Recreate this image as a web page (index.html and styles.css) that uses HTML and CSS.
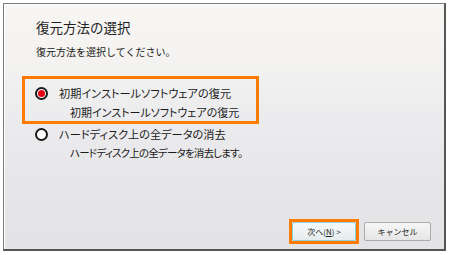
FILE: index.html
```html
<!DOCTYPE html>
<html lang="ja">
<head>
<meta charset="utf-8">
<link rel="stylesheet" href="styles.css">
</head>
<body>
<div class="dialog">
  <div class="content">
    <div class="title">復元方法の選択</div>
    <div class="lead">復元方法を選択してください。</div>
    <div class="option selected">
      <div class="opt-line"><span class="radio checked"></span><span class="label">初期インストールソフトウェアの復元</span></div>
      <div class="desc">初期インストールソフトウェアの復元</div>
    </div>
    <div class="option plain">
      <div class="opt-line"><span class="radio"></span><span class="label">ハードディスク上の全データの消去</span></div>
      <div class="desc desc-tight">ハードディスク上の全データを消去します。</div>
    </div>
  </div>
  <div class="footer">
    <div class="highlight"><button class="btn btn-next">次へ(<u>N</u>) &gt;</button></div>
    <button class="btn">キャンセル</button>
  </div>
</div>
</body>
</html>
```
FILE: styles.css
```css
html, body {
  margin: 0;
  padding: 0;
  background: #ffffff;
}
body {
  font-family: "Noto Sans CJK JP", "Noto Sans", sans-serif;
  color: #1a1a1a;
}
.dialog {
  margin: 3px 0 0 3px;
  width: 443px;
  height: 248px;
  box-sizing: border-box;
  border-left: 1px solid #7a7a7a;
  border-top: 1px solid #7a7a7a;
  border-right: 2px solid #555555;
  border-bottom: 2px solid #555555;
  box-shadow: inset 1px 1px 0 #ffffff;
  background: linear-gradient(#f7f6f3 0%, #f4f3f1 22%, #ececee 45%, #e7e7ea 70%, #e3e3e5 100%);
  display: flex;
  flex-direction: column;
}
.content {
  padding: 14px 0 0 18px;
}
.title {
  margin-left: 14px;
  font-size: 13.5px;
  line-height: 18px;
  color: #1e1e1e;
}
.lead {
  margin: 9px 0 0 14px;
  font-size: 10px;
  line-height: 14px;
}
.option {
  width: 237px;
  box-sizing: border-box;
  padding-left: 10px;
  font-feature-settings: "palt";
}
.option.selected {
  margin-top: 17px;
  height: 48px;
  border: 3px solid #ff7b00;
  padding-top: 6px;
}
.option.plain {
  margin-top: 2px;
  border-left: 3px solid transparent;
}
.opt-line {
  display: flex;
  align-items: center;
  height: 16px;
}
.radio {
  width: 13px;
  height: 13px;
  box-sizing: border-box;
  border: 2px solid #1a1a1a;
  border-radius: 50%;
  background: #ffffff;
  display: flex;
  align-items: center;
  justify-content: center;
  flex: none;
}
.radio.checked::after {
  content: "";
  width: 7px;
  height: 7px;
  border-radius: 50%;
  background: #e60012;
}
.label {
  margin-left: 11px;
  font-size: 11.2px;
  line-height: 16px;
  white-space: nowrap;
}
.desc {
  margin: 3px 0 0 35px;
  font-size: 11px;
  line-height: 16px;
  white-space: nowrap;
}
.desc-tight {
  font-size: 10.5px;
  letter-spacing: -0.8px;
}
.footer {
  margin-top: auto;
  display: flex;
  justify-content: flex-end;
  align-items: center;
  gap: 5px;
  padding: 0 13px 5px 0;
}
.highlight {
  border: 3px solid #ff7b00;
  display: flex;
}
.btn {
  width: 67px;
  height: 19px;
  box-sizing: border-box;
  border: 1px solid #ababab;
  border-radius: 2px;
  background: linear-gradient(#f6f6f6, #e6e6e6);
  font-family: "Noto Sans CJK JP", "Noto Sans", sans-serif;
  font-size: 8px;
  color: #222;
  padding: 0;
  line-height: 17px;
}
.btn-next {
  width: 64px;
  border-color: #8fd0e0;
  background: linear-gradient(#f4f8f9, #e6ecee);
}
```
